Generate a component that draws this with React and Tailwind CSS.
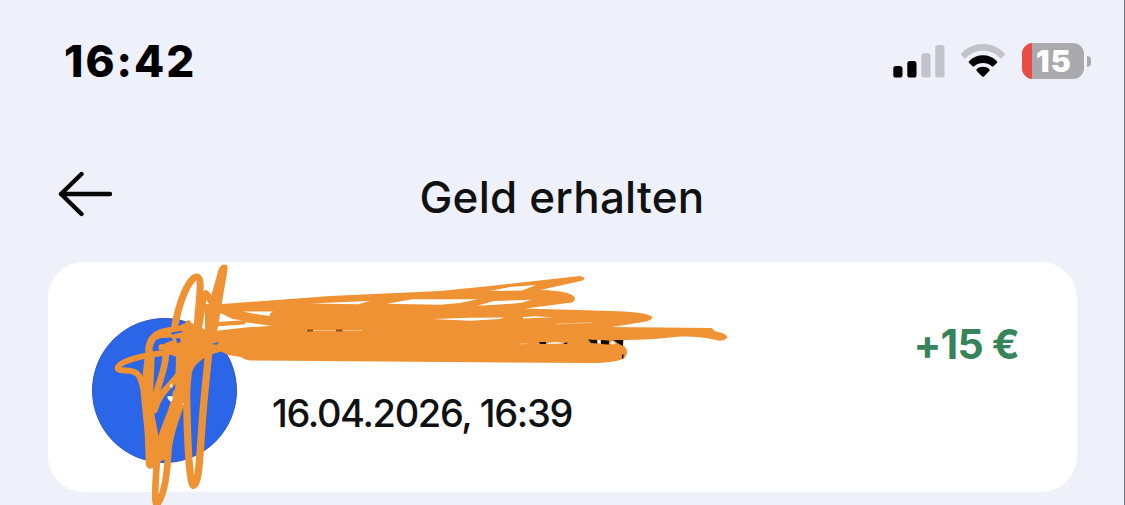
const INK = "#ef9234";

function SignalIcon() {
    return (
        <svg width="52" height="34" viewBox="0 0 52 34">
            <rect x="0.3" y="22" width="9.2" height="11.5" rx="2.6" fill="#000" />
            <rect x="14.3" y="17" width="9.2" height="16.5" rx="2.6" fill="#000" />
            <rect x="28.3" y="9.2" width="9.2" height="24.3" rx="2.6" fill="#c2c3ca" />
            <rect x="42.3" y="1" width="9.2" height="32.5" rx="2.6" fill="#c2c3ca" />
        </svg>
    );
}

function WifiIcon() {
    return (
        <svg width="46" height="36" viewBox="0 0 46 36">
            <path
                d="M1.3 10.4C13 -2.2 33 -2.2 44.7 10.4Q45.5 11.3 44.7 12.1L41.9 15Q41 15.8 40.1 15C31 5.4 15 5.4 5.9 15Q5 15.8 4.1 15L1.3 12.1Q0.5 11.3 1.3 10.4Z"
                fill="#c2c3ca"
            />
            <path
                d="M9 18.2C16.5 10.3 29.5 10.3 37 18.2Q37.8 19 37 19.8L33.5 23.2Q32.6 24 31.7 23.2C27 18.8 19 18.8 14.3 23.2Q13.4 24 12.5 23.2L9 19.8Q8.2 19 9 18.2Z"
                fill="#000"
            />
            <path
                d="M16.6 26.2C20.3 23 25.7 23 29.4 26.2Q30.2 27 29.4 27.8L23.9 33.4Q23 34.2 22.1 33.4L16.6 27.8Q15.8 27 16.6 26.2Z"
                fill="#000"
            />
        </svg>
    );
}

function Battery({ level }) {
    return (
        <div className="flex items-center">
            <div className="flex h-9 w-[62px] overflow-hidden rounded-[11px] bg-[#a9a9ae]">
                <div className="w-[10px] shrink-0 bg-[#eb4b47]" />
                <span className="ml-[1px] w-[42px] text-center text-[30px] leading-[37px] font-black tracking-[1.2px] text-white">
                    {level}
                </span>
            </div>
            <div className="ml-[3px] h-[11px] w-[4px] rounded-r-full bg-[#a9a9ae]" />
        </div>
    );
}

function StatusBar() {
    return (
        <div className="flex h-[122px] items-center justify-between pr-[33px] pl-[64px]">
            <span className="text-[44px] leading-none font-extrabold tracking-[2px]">16:42</span>
            <div className="flex items-center">
                <SignalIcon />
                <div className="mr-[16px] ml-[15px]">
                    <WifiIcon />
                </div>
                <Battery level="15" />
            </div>
        </div>
    );
}

function Header({ title }) {
    return (
        <div className="grid h-[140px] grid-cols-[1fr_auto_1fr] items-center px-[58px] pt-1.5">
            <svg width="56" height="48" viewBox="0 0 56 48" className="mb-0.5">
                <path
                    d="M52 24H3M23.5 4L3 24L23.5 44"
                    fill="none"
                    stroke="#050505"
                    strokeWidth="4.4"
                    strokeLinecap="round"
                    strokeLinejoin="round"
                />
            </svg>
            <h1 className="mt-1 text-[44px] leading-none font-medium tracking-[0.2px] text-[#101113]">
                {title}
            </h1>
        </div>
    );
}

// Marker strokes that hide the name and the avatar
function Scribble() {
    return (
        <svg
            className="pointer-events-none absolute top-0 left-0"
            width="1125"
            height="505"
            viewBox="0 0 1125 505"
        >
            <path
                fill={INK}
                fillRule="evenodd"
                d="M205 304L222 304L330 296L440 291L490 286L580 276Q586 277 583 280.5L540 290Q575 291 575 299Q574 303 568 303L525 308.5L610 311Q648 312 652 317Q653 321 640 322.5L612 327L711 328Q714 329 714 331L722 333Q728 335 727 338Q723 342 716 340Q700 336 680 336.5Q650 340 624 340L623 345Q629 350 626 356Q622 363 590 363L250 360.5Q243 359 241 357L228 355L218 350L205 350Z
                M311 303.6L345 302L370 301L358 304.3Z
                M387 303.8L412 299.3L478 299.3L460 303L440 304.7Z
                M243 311.5L273 311.5Q269 313 270 316L255 314Z
                M215 325L245 322.3L272 325.7L245 327.5L215 331Z
                M216 313L225 314L233 317L246 320.8L215 322.5Z
                M490 291L510 287L536 285L522 290.5Z
                M477 305.7L494 301L532 299.8L520 303L500 304.5Z
                M432 319L470 317.8L504 317.5L500 319L470 320.7Z
                M523 317L535 316.3L553 317.3L523 318.4Z"
            />
            {/* zigzag over the avatar, drawn on a three times finer grid */}
            <g transform="translate(110 260) scale(0.33333)">
                <path
                    fill={INK}
                    d="M170 212L225 190Q235 170 245 190L275 205L320 220L345 272Q265 288 246 335L238 420L218 432L195 400L198 290L150 272L165 250L190 240Z"
                />
                <path
                    fill={INK}
                    d="M104 290L134 290L128 435L146 530L187 500L180 598L160 600L151 604Q150 614 135 614Q132 627 118 626Q105 622 107 600L104 520L92 400Z"
                />
                <path fill={INK} d="M326 28Q334 8 350 15Q355 20 351 38L318 235L288 235L300 120Z" />
                <g fill="none" stroke={INK} strokeLinecap="round" strokeLinejoin="round">
                    <path strokeWidth="21" d="M190 225C205 120 240 48 262 51C280 58 265 120 260 225" />
                    <path strokeWidth="22" d="M288 102L318 140L370 166L410 172" />
                    <path strokeWidth="13" d="M285 108L268 215M275 142L300 142M312 193L400 187" />
                    <path strokeWidth="18" d="M175 277C100 285 25 303 23 325C28 338 70 323 86 346C100 370 106 420 118 500" />
                    <path strokeWidth="22" d="M117 360L117 262C125 217 160 215 200 210" />
                    <path strokeWidth="13" d="M140 232C160 222 175 232 200 222M145 272L185 265" />
                    <path strokeWidth="20" d="M167 290C165 330 145 370 128 440" />
                    <path strokeWidth="20" d="M208 340C180 385 150 390 134 450" />
                    <path strokeWidth="30" d="M203 400C197 450 170 490 158 540" />
                    <path strokeWidth="20" d="M141 600C138 650 130 740 142 732C165 700 172 640 176 560C185 500 205 460 218 415" />
                    <path strokeWidth="22" d="M229 350C230 450 234 675 251 676C271 670 268 560 285 390L296 280" />
                </g>
                <path
                    fill="#2b65e8"
                    d="M137 243Q150 234 166 240L165 250Q148 250 146 260L158 272L138 272Q132 255 137 243Z"
                />
                <path fill={INK} d="M145 262Q145 250 160 252L175 262L160 270L148 272Z" />
                <path fill="#2b65e8" d="M183 218L215 212L218 216L186 224ZM197 236L210 234L212 246L202 250Z" />
                <path fill="#2b65e8" d="M305 252L328 245L320 254Z" />
                <path
                    fill="#fff"
                    d="M172 409Q182 406 190 412L184 426Q172 420 172 409ZM178 378L186 370L187 384ZM217 432L222 430L220 436Z"
                />
            </g>
            {/* bits of lettering that still show between the strokes */}
            <g fill="#100b06">
                <path d="M588 339.5L597 340L597 343.5L591 343Z" />
                <path d="M601 340L609 340.5L609 344.5L601 344Z" />
                <path d="M613 340L623 340L623 346L619 344ZM622 355L623.5 354L623.5 358L622 359Z" />
                <path d="M539 342L546 342L546 344L540 344ZM564 343L567.5 342.6L567 344L564 344Z" />
            </g>
            <g fill="#fdeedd">
                <path d="M597.5 340L600.5 340L600.5 344L598 343Z" />
                <path d="M609.5 343L613 340.5L616 344L612 344.5Z" />
                <path d="M547 343L555 341.8L564 342.8L560 343.8L548 344Z" />
            </g>
            <path stroke="#f7bf82" d="M306 330.5H362M519 344L527 343.5M556 324L592 322.6" />
            <path stroke="#8a4d16" strokeWidth="2.2" d="M307 330.5H313M336 330.5H342.5" />
        </svg>
    );
}

function TransactionCard({ amount, date }) {
    return (
        <div className="mr-[47px] ml-12 flex h-[230px] rounded-[36px] bg-white pt-[56px] pr-[58px] pl-[44px]">
            <div className="size-[145px] shrink-0 rounded-full border border-[#2854bd] bg-[#2b65e8]" />
            <div className="ml-[35px] flex-1 pt-[76px]">
                <p className="text-[38px] leading-[38px] font-medium tracking-[-1.35px] text-[#101113]">
                    {date}
                </p>
            </div>
            <p className="pt-[6px] text-[41px] leading-[40px] font-bold tracking-[-0.8px] text-[#38845a]">
                {amount}
            </p>
        </div>
    );
}

function App() {
    return (
        <div className="relative h-[505px] w-[1125px] overflow-hidden border-r border-[#747981] bg-[#eef1fa] font-['Inter',sans-serif] text-black">
            <StatusBar />
            <Header title="Geld erhalten" />
            <TransactionCard amount="+15 €" date="16.04.2026, 16:39" />
            <Scribble />
        </div>
    );
}

export default App;
